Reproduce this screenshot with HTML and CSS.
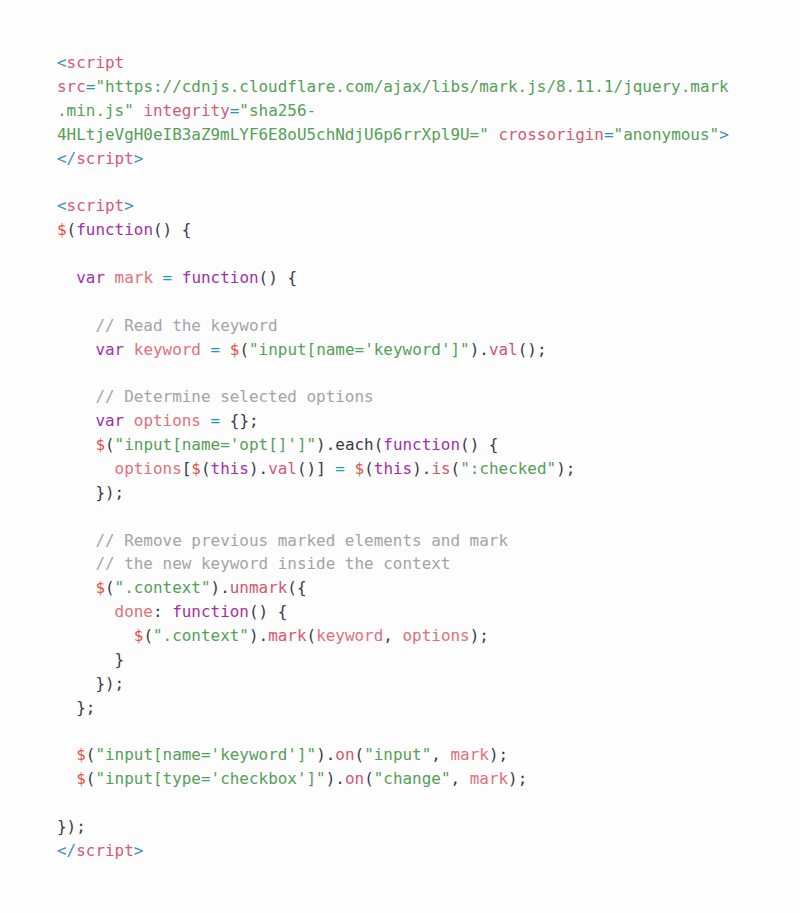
FILE: index.html
```html
<!DOCTYPE html>
<html lang="en">
<head>
<meta charset="utf-8">
<title>mark.js example</title>
<link rel="stylesheet" href="styles.css">
</head>
<body>
<pre class="code"><code><span class="t">&lt;</span><span class="n">script</span>
<span class="n">src</span><span class="o">=</span><span class="s">"https://cdnjs.cloudflare.com/ajax/libs/mark.js/8.11.1/jquery.mark</span>
<span class="s">.min.js"</span> <span class="n">integrity</span><span class="o">=</span><span class="s">"sha256-</span>
<span class="s">4HLtjeVgH0eIB3aZ9mLYF6E8oU5chNdjU6p6rrXpl9U="</span> <span class="n">crossorigin</span><span class="o">=</span><span class="s">"anonymous"</span><span class="t">&gt;</span>
<span class="t">&lt;/</span><span class="n">script</span><span class="t">&gt;</span>

<span class="t">&lt;</span><span class="n">script</span><span class="t">&gt;</span>
<span class="d">$</span>(<span class="k">function</span>() {

  <span class="k">var</span> <span class="v">mark</span> <span class="o">=</span> <span class="k">function</span>() {

    <span class="c">// Read the keyword</span>
    <span class="k">var</span> <span class="v">keyword</span> <span class="o">=</span> <span class="d">$</span>(<span class="s">"input[name='keyword']"</span>).<span class="p">val</span>();

    <span class="c">// Determine selected options</span>
    <span class="k">var</span> <span class="v">options</span> <span class="o">=</span> {};
    <span class="d">$</span>(<span class="s">"input[name='opt[]']"</span>).each(<span class="k">function</span>() {
      <span class="v">options</span>[<span class="d">$</span>(<span class="k">this</span>).<span class="p">val</span>()] <span class="o">=</span> <span class="d">$</span>(<span class="k">this</span>).<span class="p">is</span>(<span class="s">":checked"</span>);
    });

    <span class="c">// Remove previous marked elements and mark</span>
    <span class="c">// the new keyword inside the context</span>
    <span class="d">$</span>(<span class="s">".context"</span>).<span class="p">unmark</span>({
      <span class="v">done</span>: <span class="k">function</span>() {
        <span class="d">$</span>(<span class="s">".context"</span>).<span class="p">mark</span>(<span class="v">keyword</span>, <span class="v">options</span>);
      }
    });
  };

  <span class="d">$</span>(<span class="s">"input[name='keyword']"</span>).<span class="p">on</span>(<span class="s">"input"</span>, <span class="v">mark</span>);
  <span class="d">$</span>(<span class="s">"input[type='checkbox']"</span>).<span class="p">on</span>(<span class="s">"change"</span>, <span class="v">mark</span>);

});
<span class="t">&lt;/</span><span class="n">script</span><span class="t">&gt;</span></code></pre>
</body>
</html>
```

FILE: styles.css
```css
html, body {
  margin: 0;
  padding: 0;
  background: #ffffff;
}

.code {
  margin: 0;
  padding: 51px 20px 39px 57px;
  min-height: 823px;
  background: #fdfdfd;
  font-family: "DejaVu Sans Mono", "Liberation Mono", monospace;
  font-size: 15.95px;
  line-height: 23.88px;
  color: #383a42;
  white-space: pre;
}

.code code {
  font-family: inherit;
}

.t { color: #3f8fc2; }
.n { color: #d45a72; }
.o { color: #1a9cb0; }
.s { color: #54a057; }
.k { color: #a22fa8; }
.d { color: #e4524a; }
.v { color: #e0707a; }
.p { color: #d4566e; }
.c { color: #a3a3a8; }
```
